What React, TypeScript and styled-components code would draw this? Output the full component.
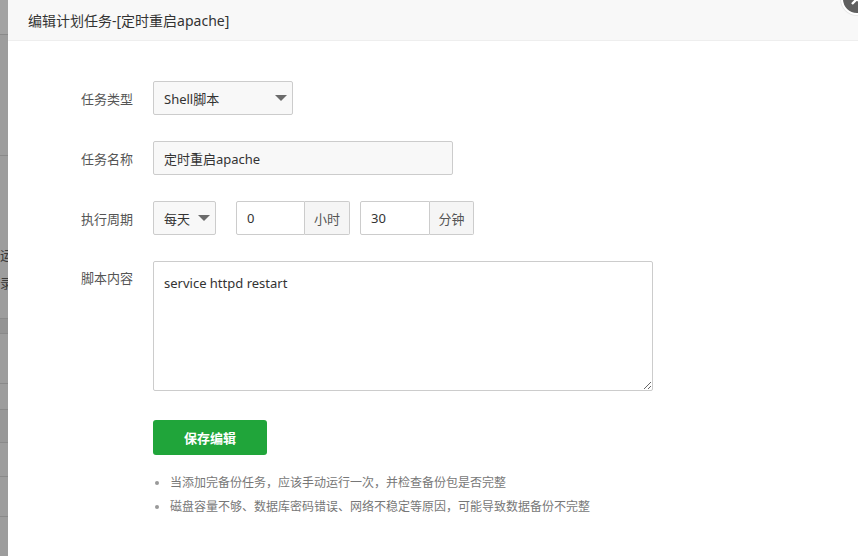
import React from 'react';
import styled, { createGlobalStyle } from 'styled-components';

const GlobalStyle = createGlobalStyle`
  html, body {
    margin: 0;
    padding: 0;
    background: #fff;
    overflow: hidden;
  }
  * {
    box-sizing: border-box;
  }
  body {
    font-family: "Noto Sans", "Noto Sans CJK SC", sans-serif;
  }
`;

const Screen = styled.div`
  width: 858px;
  height: 556px;
  display: flex;
  position: relative;
  overflow: hidden;
`;

const Backdrop = styled.div`
  width: 8px;
  flex: none;
  display: flex;
  flex-direction: column;
  background: #9d9d9d;
`;

const BackdropRow = styled.div<{ $h: number; $bg?: string }>`
  height: ${p => p.$h}px;
  flex: none;
  background: ${p => p.$bg || 'transparent'};
  border-bottom: 1px solid #8a8a8a;
  font-size: 13px;
  color: #3a3a3a;
  white-space: nowrap;
  overflow: hidden;
  line-height: 28px;
`;

const BackdropText = styled.div`
  margin-top: 85px;
`;

const Dialog = styled.div`
  flex: 1;
  display: flex;
  flex-direction: column;
  background: #fff;
`;

const Header = styled.div`
  height: 41px;
  flex: none;
  padding-left: 20px;
  background: #f8f8f8;
  border-bottom: 1px solid #eee;
  display: flex;
  align-items: center;
  font-size: 14px;
  color: #333;
`;

const Close = styled.div`
  position: absolute;
  left: 841px;
  top: -17px;
  width: 32px;
  height: 32px;
  border-radius: 50%;
  background: #5f5f5f;
  border: 2px solid #fff;
  box-shadow: 0 0 0 1px #e8e8e8;
  display: flex;
  align-items: center;
  justify-content: center;
`;

const Body = styled.div`
  padding: 40px 0 0 0;
  display: flex;
  flex-direction: column;
`;

const Row = styled.div<{ $mb: number; $top?: boolean }>`
  display: flex;
  align-items: ${p => (p.$top ? 'flex-start' : 'center')};
  margin-bottom: ${p => p.$mb}px;
`;

const Label = styled.div<{ $pt?: number }>`
  width: 145px;
  flex: none;
  padding-right: 20px;
  padding-top: ${p => p.$pt || 0}px;
  text-align: right;
  font-size: 13px;
  color: #555;
`;

const Select = styled.div<{ $w: number }>`
  width: ${p => p.$w}px;
  height: 34px;
  border: 1px solid #ccc;
  border-radius: 2px;
  background: #f8f8f8;
  display: flex;
  align-items: center;
  justify-content: space-between;
  padding: 0 5px 0 10px;
  font-size: 13px;
  color: #333;
`;

const Caret = styled.span`
  width: 0;
  height: 0;
  border-left: 6px solid transparent;
  border-right: 6px solid transparent;
  border-top: 6px solid #6b6b6b;
`;

const TextInput = styled.div<{ $w: number; $bg?: string }>`
  width: ${p => p.$w}px;
  height: 34px;
  border: 1px solid #ccc;
  border-radius: 2px;
  background: ${p => p.$bg || '#fff'};
  display: flex;
  align-items: center;
  padding: 0 10px;
  font-size: 13px;
  color: #333;
`;

const Group = styled.div<{ $ml: number }>`
  display: flex;
  margin-left: ${p => p.$ml}px;
`;

const GroupInput = styled(TextInput)`
  border-radius: 2px 0 0 2px;
`;

const Addon = styled.div<{ $w: number }>`
  width: ${p => p.$w}px;
  height: 34px;
  border: 1px solid #ccc;
  border-left: none;
  border-radius: 0 2px 2px 0;
  background: #f5f5f5;
  display: flex;
  align-items: center;
  justify-content: center;
  font-size: 13px;
  color: #555;
`;

const Script = styled.textarea`
  width: 500px;
  height: 130px;
  border: 1px solid #ccc;
  border-radius: 2px;
  padding: 12px 10px;
  font-family: "Noto Sans", "Noto Sans CJK SC", sans-serif;
  font-size: 13px;
  color: #333;
  outline: none;
  resize: both;
`;

const SaveButton = styled.button`
  margin-left: 145px;
  width: 114px;
  height: 35px;
  border: none;
  border-radius: 3px;
  background: #20a53a;
  color: #fff;
  font-family: "Noto Sans", "Noto Sans CJK SC", sans-serif;
  font-size: 13px;
  font-weight: bold;
`;

const Tips = styled.ul`
  margin: 16px 0 0 0;
  padding: 0 0 0 162px;
  list-style: disc;
  font-size: 12px;
  color: #777;
  line-height: 24px;

  li::marker {
    color: #999;
  }
`;

export default function App() {
  return (
    <>
      <GlobalStyle />
      <Screen>
        <Backdrop>
          <BackdropRow $h={35} $bg="#a3a3a3" />
          <BackdropRow $h={121} />
          <BackdropRow $h={163}>
            <BackdropText>运</BackdropText>
            <div>录</div>
          </BackdropRow>
          <BackdropRow $h={15} $bg="#949494" />
          <BackdropRow $h={50} />
          <BackdropRow $h={26} />
          <BackdropRow $h={33} $bg="#989898" />
          <BackdropRow $h={34} />
          <BackdropRow $h={40} />
        </Backdrop>
        <Dialog>
          <Header>编辑计划任务-[定时重启apache]</Header>
          <Body>
            <Row $mb={26}>
              <Label>任务类型</Label>
              <Select $w={140}>
                Shell脚本
                <Caret />
              </Select>
            </Row>
            <Row $mb={26}>
              <Label>任务名称</Label>
              <TextInput $w={300} $bg="#f8f8f8">定时重启apache</TextInput>
            </Row>
            <Row $mb={26}>
              <Label>执行周期</Label>
              <Select $w={63}>
                每天
                <Caret />
              </Select>
              <Group $ml={20}>
                <GroupInput $w={69}>0</GroupInput>
                <Addon $w={45}>小时</Addon>
              </Group>
              <Group $ml={10}>
                <GroupInput $w={70}>30</GroupInput>
                <Addon $w={44}>分钟</Addon>
              </Group>
            </Row>
            <Row $mb={29} $top>
              <Label $pt={7}>脚本内容</Label>
              <Script defaultValue="service httpd restart" />
            </Row>
            <SaveButton>保存编辑</SaveButton>
            <Tips>
              <li>当添加完备份任务，应该手动运行一次，并检查备份包是否完整</li>
              <li>磁盘容量不够、数据库密码错误、网络不稳定等原因，可能导致数据备份不完整</li>
            </Tips>
          </Body>
        </Dialog>
        <Close>
          <svg width="14" height="14" viewBox="0 0 14 14">
            <path d="M2 2L12 12M12 2L2 12" stroke="#fff" strokeWidth="2.4" />
          </svg>
        </Close>
      </Screen>
    </>
  );
}
